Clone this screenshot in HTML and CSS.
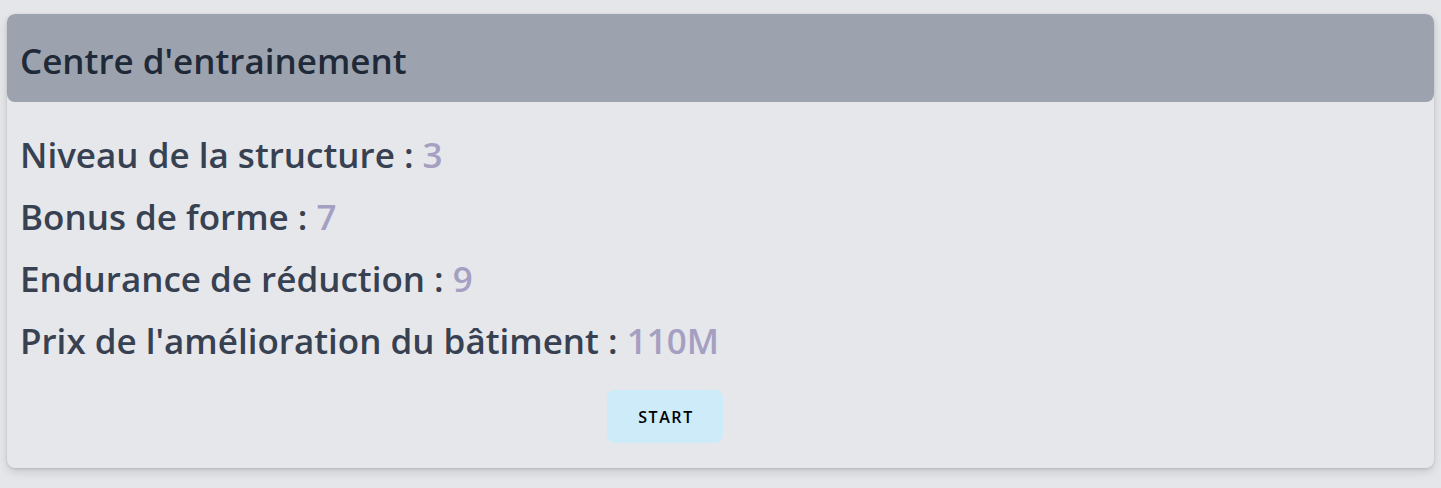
FILE: index.html
```html
<!DOCTYPE html>
<html lang="fr">
<head>
<meta charset="utf-8">
<title>Centre d'entrainement</title>
<link rel="stylesheet" href="styles.css">
</head>
<body>
<div class="card">
  <div class="card-header">
    <h2 class="title">Centre d'entrainement</h2>
  </div>
  <div class="card-body">
    <p class="stat">Niveau de la structure : <span class="val">3</span></p>
    <p class="stat">Bonus de forme : <span class="val">7</span></p>
    <p class="stat">Endurance de réduction : <span class="val">9</span></p>
    <p class="stat">Prix de l'amélioration du bâtiment : <span class="val">110M</span></p>
    <div class="actions">
      <button class="btn">START</button>
    </div>
  </div>
</div>
</body>
</html>
```
FILE: styles.css
```css
html, body {
  margin: 0;
  padding: 0;
  background: #e5e6ea;
}
body {
  padding: 14px 7px 20px 7px;
  font-family: "Open Sans", "Noto Sans", sans-serif;
}
.card {
  background: #e5e7eb;
  border-radius: 8px;
  box-shadow: 0 4px 10px rgba(0,0,0,0.12), 0 1px 3px rgba(0,0,0,0.12);
  overflow: hidden;
}
.card-header {
  background: #9ca3af;
  height: 88px;
  border-radius: 8px;
  display: flex;
  align-items: center;
  padding: 0 13px;
}
.title {
  margin: 0;
  font-size: 35px;
  font-weight: 600;
  color: #1f2937;
  line-height: 1;
  padding-top: 4px;
}
.card-body {
  padding: 22px 13px 25px 13px;
}
.stat {
  margin: 0;
  line-height: 62px;
  font-size: 35px;
  font-weight: 600;
  color: #374151;
}
.val {
  color: #a59fc2;
}
.actions {
  display: flex;
  padding-left: 587px;
  margin-top: 18px;
}
.btn {
  width: 116px;
  height: 53px;
  background: #cdebf9;
  border: none;
  border-radius: 8px;
  font-family: "Open Sans", sans-serif;
  font-size: 16px;
  font-weight: 600;
  letter-spacing: 1.6px;
  color: #000;
  padding: 0 0 0 2px;
}
```
